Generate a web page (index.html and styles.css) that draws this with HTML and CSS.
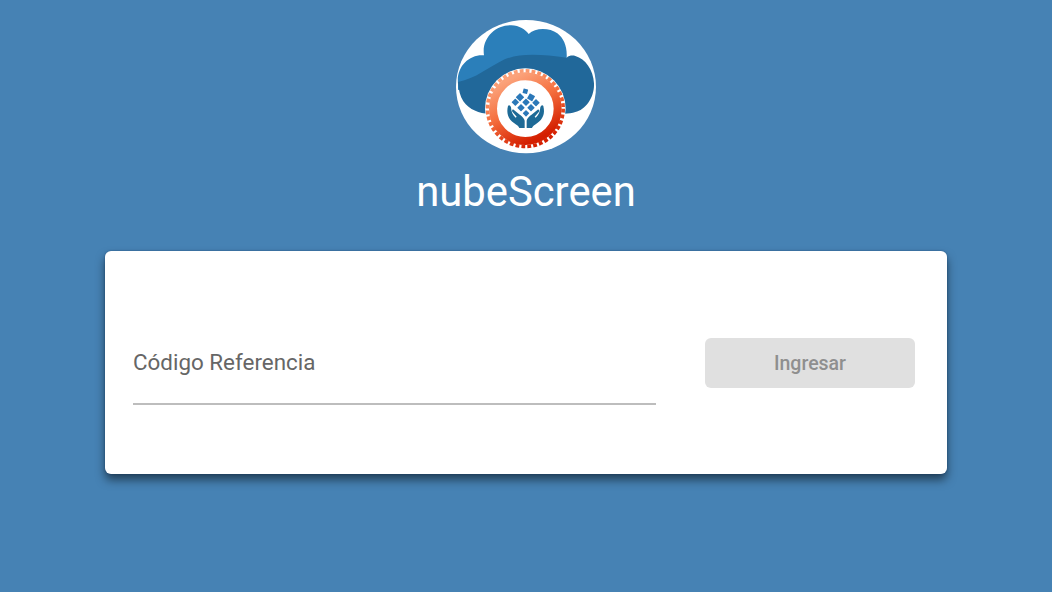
FILE: index.html
```html
<!DOCTYPE html>
<html lang="es">
<head>
    <meta charset="UTF-8" />
    <meta name="viewport" content="width=device-width, initial-scale=1.0" />
    <title>nubeScreen</title>
    <link rel="stylesheet" href="styles.css">
</head>
<body>
    <div class="main">
        <div class="brand">
            <svg class="logo" viewBox="0 0 480 450" aria-hidden="true">
                <defs>
                    <linearGradient id="gearFill" x1="0.25" y1="0.05" x2="0.7" y2="0.95">
                        <stop offset="0" stop-color="#fba27a" />
                        <stop offset="0.45" stop-color="#f5703f" />
                        <stop offset="1" stop-color="#d41f00" />
                    </linearGradient>
                    <path id="hand" d="M186 288 C180 312 188 328 204 339 C213 345 218 349 220 354 L236 354 L236 332 C234 322 224 316 214 308 L203 299 C199 298 197 301 199 305 L212 320 L209 323 C200 315 196 306 195 292 C193 285 188 284 186 288 Z" />
                </defs>
                <ellipse cx="240" cy="230" rx="210" ry="200" fill="#fff" />
                <path fill="#2b7fba" d="M36 222 C30 170 70 132 114 136 C106 84 150 44 196 46 C220 47 238 58 248 72 C268 52 310 52 334 70 C354 86 364 110 362 144 L200 200 L36 240 Z" />
                <path fill="#21689a" d="M36 216 C90 206 126 172 176 148 C226 128 290 134 362 143 C370 136 380 136 388 138 C418 146 442 180 444 220 C446 262 418 300 388 306 C370 312 340 312 320 312 L130 312 C100 310 70 300 52 274 C42 258 38 240 36 216 Z" />
                <circle cx="238" cy="296" r="121" fill="#fff" />
                <circle cx="238" cy="296" r="113.5" fill="none" stroke="url(#gearFill)" stroke-width="11" stroke-dasharray="11.5 6.33" />
                <circle cx="238" cy="296" r="97" fill="none" stroke="url(#gearFill)" stroke-width="24" />
                <g fill="#2b78b8">
                    <rect x="231" y="237" width="14" height="14" rx="1" transform="rotate(15 238 244)" />
                    <rect x="213" y="253" width="18" height="18" rx="1" transform="rotate(45 222 262)" />
                    <rect x="246" y="253" width="18" height="18" rx="1" transform="rotate(30 255 262)" />
                    <rect x="200" y="269" width="16" height="16" rx="1" transform="rotate(45 208 277)" />
                    <rect x="232" y="269" width="16" height="16" rx="1" transform="rotate(45 240 277)" />
                    <rect x="262" y="270" width="16" height="16" rx="1" transform="rotate(45 270 278)" />
                    <rect x="217" y="285" width="16" height="16" rx="1" transform="rotate(45 225 293)" />
                    <rect x="247" y="285" width="16" height="16" rx="1" transform="rotate(45 255 293)" />
                    <rect x="233" y="303" width="14" height="14" rx="1" transform="rotate(45 240 310)" />
                </g>
                <g fill="#1d6a96">
                    <use href="#hand" />
                    <use href="#hand" transform="matrix(-1 0 0 1 478 0)" />
                </g>
            </svg>
            <h1 class="title">nubeScreen</h1>
        </div>
        <form class="card" action="">
            <div class="field">
                <input class="field-input" type="text" id="codigo" name="codigo" placeholder="Código Referencia" aria-label="Código Referencia" />
            </div>
            <button class="btn-login" type="submit" disabled>Ingresar</button>
        </form>
    </div>
</body>
</html>
```
FILE: styles.css
```css
body {
    font-family: Roboto, Arial, sans-serif;
    background-color: #4682b4;
    margin: 0;
    padding: 0;
}

.main {
    display: flex;
    flex-direction: column;
    align-items: center;
    height: 592px;
    overflow: hidden;
}

.brand {
    display: flex;
    flex-direction: column;
    align-items: center;
    padding-top: 10px;
}

.logo {
    display: block;
    width: 160px;
    height: 150px;
}

.title {
    margin: 7px 0 0;
    color: #fff;
    font-size: 41.8px;
    font-weight: 400;
    line-height: 50px;
}

.card {
    display: flex;
    align-items: center;
    gap: 49px;
    box-sizing: border-box;
    width: 842px;
    height: 223px;
    margin-top: 34px;
    padding: 0 32px 0 28px;
    background-color: #fff;
    border-radius: 6px;
    box-shadow: 0 0 2px rgba(0, 40, 90, 0.5), 0 6px 10px rgba(0, 0, 0, 0.5);
}

.field {
    flex: 1;
    margin-top: 1px;
    border-bottom: 2px solid #bdbdbd;
}

.field-input {
    display: block;
    width: 100%;
    height: 82px;
    padding: 0;
    box-sizing: border-box;
    border: none;
    outline: none;
    background: transparent;
    font-family: Roboto, Arial, sans-serif;
    font-size: 22.4px;
    color: #666;
}

.field-input::placeholder {
    color: #666;
    opacity: 1;
}

.btn-login {
    width: 210px;
    height: 50px;
    padding: 1px 0 0;
    border: none;
    border-radius: 6px;
    background-color: #e0e0e0;
    color: #8f8f8f;
    font-family: Roboto, Arial, sans-serif;
    font-size: 19.5px;
    font-weight: 500;
}
```
